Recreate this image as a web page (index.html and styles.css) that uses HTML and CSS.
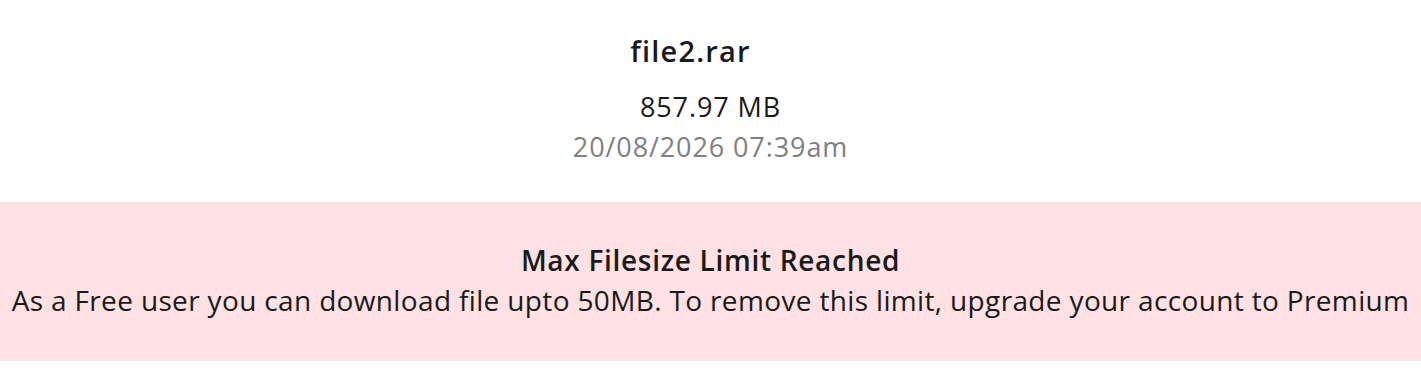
FILE: index.html
```html
<!DOCTYPE html>
<html>
<head>
  <title>file2.rar</title>
  <meta charset="utf-8"/>
  <link rel="stylesheet" href="styles.css">
</head>
<body>
  <div id="file-section">
    <h1 class="file-name">file2.rar</h1>
    <p class="file-size">857.97 MB</p>
    <p class="file-date">20/08/2026 07:39am</p>
  </div>

  <div class="limit-box">
    <h3>Max Filesize Limit Reached</h3>
    <p>As a Free user you can download file upto 50MB. To remove this limit, upgrade your account to Premium</p>
  </div>
</body>
</html>
```
FILE: styles.css
```css
body {
    margin: 0px;
    padding: 0px;
    background-color: #fff;
    font-family: "Open Sans", "Noto Sans", sans-serif;
    color: #1a1a1a;
}

#file-section {
    text-align: center;
    padding-top: 31px;
    padding-bottom: 35px;
}

.file-name {
    font-size: 29px;
    font-weight: 600;
    letter-spacing: 1.2px;
    margin: 0px 0px 16px 0px;
    padding-right: 40px;
    line-height: 40px;
}

.file-size, .file-date {
    font-size: 27px;
    letter-spacing: 0.9px;
    margin: 0px;
    line-height: 40px;
}

.file-date {
    color: #808080;
}

.limit-box {
    background-color: #fde1e3;
    text-align: center;
    padding: 38px 0px 41px 0px;
}

.limit-box h3 {
    font-size: 28px;
    font-weight: 600;
    letter-spacing: 0.7px;
    margin: 0px;
    line-height: 40px;
}

.limit-box p {
    font-size: 28px;
    letter-spacing: 0.35px;
    margin: 0px;
    line-height: 40px;
}
```
